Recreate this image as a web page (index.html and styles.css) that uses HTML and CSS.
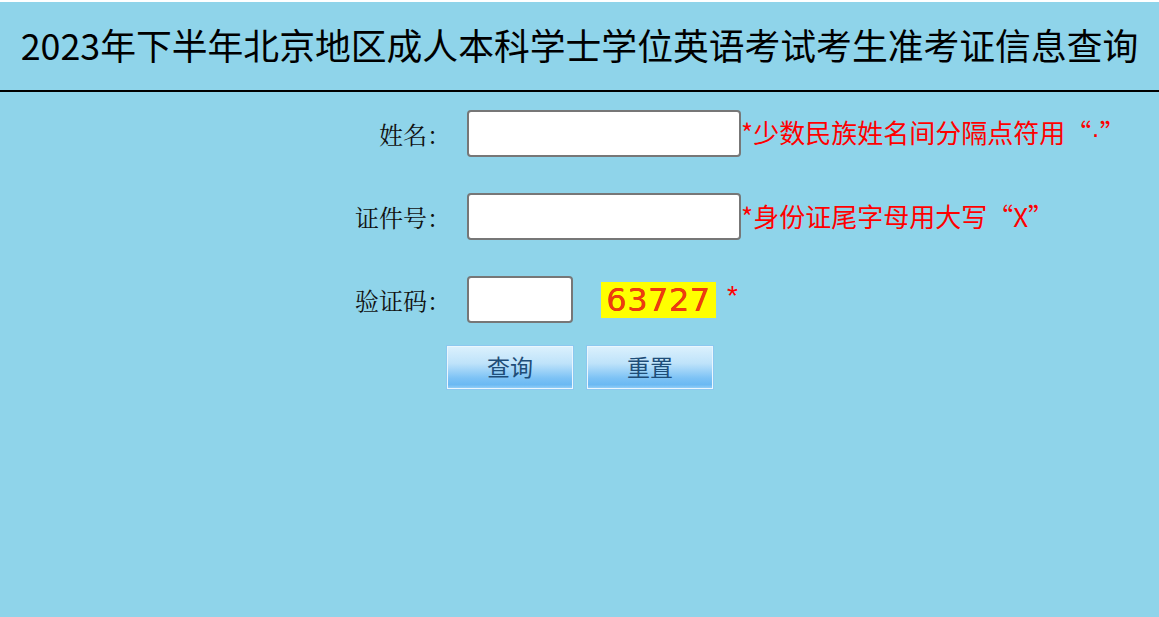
FILE: index.html
```html
<!DOCTYPE html>
<html lang="zh-CN">
<head>
<meta charset="utf-8">
<title>准考证信息查询</title>
<link rel="stylesheet" href="styles.css">
</head>
<body>
<div class="page">
  <header class="header">
    <h1 class="title">2023年下半年北京地区成人本科学士学位英语考试考生准考证信息查询</h1>
  </header>
  <form class="form">
    <div class="row">
      <label class="label">姓名：</label>
      <input class="field field-long" type="text">
      <span class="hint">*少数民族姓名间分隔点符用“<span class="dot">·</span>”</span>
    </div>
    <div class="row">
      <label class="label">证件号：</label>
      <input class="field field-long" type="text">
      <span class="hint">*身份证尾字母用大写“X”</span>
    </div>
    <div class="row">
      <label class="label">验证码：</label>
      <input class="field field-short" type="text">
      <span class="captcha">63727</span>
      <span class="star">*</span>
    </div>
    <div class="buttons">
      <button class="btn" type="button">查询</button>
      <button class="btn" type="button">重置</button>
    </div>
  </form>
</div>
</body>
</html>
```
FILE: styles.css
```css
html, body {
  margin: 0;
  padding: 0;
  background: #8fd4ea;
}
body {
  border-top: 2px solid #ffffff;
  min-height: 615px;
  font-family: "Noto Sans CJK SC", "Noto Sans", sans-serif;
}
.page {
  width: 1159px;
}
.header {
  height: 88px;
  border-bottom: 2px solid #000000;
  display: flex;
  align-items: center;
  justify-content: center;
}
.title {
  margin: 0;
  font-size: 35.8px;
  font-weight: normal;
  color: #000;
  line-height: 1;
  padding-bottom: 2px;
  white-space: nowrap;
}
.form {
  display: flex;
  flex-direction: column;
  padding-top: 18px;
}
.row {
  display: flex;
  align-items: center;
  height: 47px;
  margin-bottom: 36px;
}
.label {
  width: 451px;
  text-align: right;
  font-family: "Noto Serif CJK SC", "Noto Sans CJK SC", serif;
  font-size: 24px;
  color: #111;
  margin-right: 16px;
}
.field {
  box-sizing: border-box;
  height: 47px;
  border: 2px solid #777777;
  border-radius: 4px;
  background: #ffffff;
  margin: 0;
  padding: 0 4px;
  font-size: 20px;
}
.field-long { width: 274px; }
.field-short { width: 106px; }
.hint {
  color: #ff0000;
  font-size: 26px;
  white-space: nowrap;
  line-height: 1;
  padding-bottom: 2px;
}
.dot {
  font-family: "Liberation Sans", sans-serif;
}
.captcha {
  margin-left: 28px;
  width: 115px;
  height: 36px;
  background: #ffff00;
  font-family: "DejaVu Sans", sans-serif;
  font-size: 32px;
  line-height: 36px;
  text-align: center;
  color: #f03a10;
  text-shadow: 0 0 0.6px #a03000;
  letter-spacing: 0.5px;
}
.star {
  margin-left: 11px;
  color: #ff0000;
  font-family: "Liberation Sans", sans-serif;
  font-size: 28px;
  line-height: 1;
  margin-top: -8px;
}
.buttons {
  display: flex;
  gap: 12px;
  padding-left: 446px;
  margin-top: -14px;
}
.btn {
  box-sizing: border-box;
  width: 128px;
  height: 45px;
  border: 1px solid #8cc8ef;
  box-shadow: inset 0 0 0 1px #eaf6fd;
  background: linear-gradient(#dcf1fd 0%, #bfe3fa 40%, #7cc2f5 75%, #6bb9f3 90%, #9dd3f7 100%);
  color: #1e4d78;
  font-family: "Noto Sans CJK SC", sans-serif;
  font-size: 23px;
  padding: 0 0 4px 0;
  margin: 0;
}
```
